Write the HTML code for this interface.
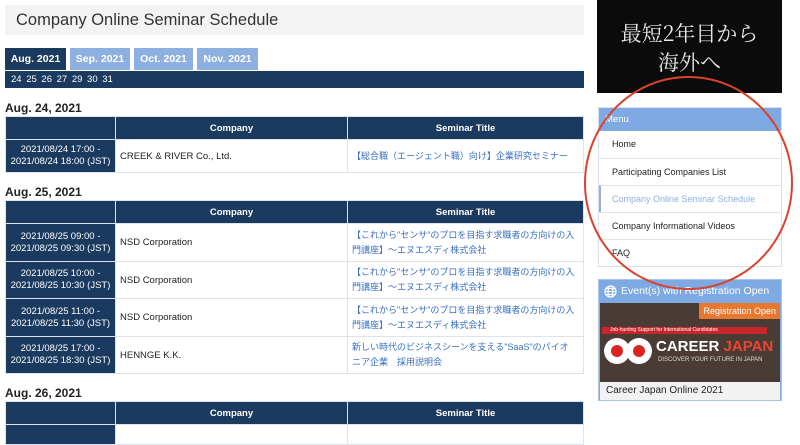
<!DOCTYPE html>
<html><head><meta charset="utf-8"><style>
*{box-sizing:border-box;margin:0;padding:0}
body{width:800px;height:429px;overflow:hidden;background:#fff;font-family:"Liberation Sans","Noto Sans CJK JP",sans-serif;color:#222;position:relative}
.a{position:absolute}
.title{left:5px;top:5px;width:579px;height:30px;background:#f3f3f3;font-size:16.5px;padding:6px 11px;color:#333}
.tab{top:48px;height:22px;font-size:10.5px;font-weight:bold;color:#fff;text-align:center;line-height:22px;background:#8db0e0}
.dates{left:5px;top:71px;width:579px;height:17px;background:#1b3a5f;color:#fff;font-size:9.5px;line-height:17px;padding-left:6px;word-spacing:2px}
h3{position:absolute;left:5px;font-size:12px;font-weight:bold;color:#222}
table{position:absolute;left:5px;width:579px;border-collapse:collapse;font-size:9.5px;table-layout:fixed}
td,th{border:1px solid #dde3ea;padding:0 4px;overflow:hidden}
th{background:#1b3a5f;color:#fff;height:23px;font-weight:bold}
td.t{background:#1b3a5f;color:#fff;text-align:center;line-height:12px;padding:0;white-space:nowrap;font-size:9.5px}
td.s{color:#3a6fc0;line-height:15px;font-size:9px;padding-right:6px}
.menu{left:598px;top:107px;width:184px;border:1px solid #dde;font-size:9px}
.menu .h{background:#7ea9e2;color:#fff;height:23px;line-height:23px;padding-left:6px;font-size:9.5px}
.menu .i{height:27px;line-height:27px;padding-left:13px;border-top:1px solid #e3e3e3}
</style></head><body>
<div class="a title">Company Online Seminar Schedule</div>
<div class="a tab" style="left:5px;width:61px;background:#1b3a5f">Aug. 2021</div>
<div class="a tab" style="left:70px;width:60px">Sep. 2021</div>
<div class="a tab" style="left:134px;width:59px">Oct. 2021</div>
<div class="a tab" style="left:197px;width:61px">Nov. 2021</div>
<div class="a dates">24 25 26 27 29 30 31</div>
<h3 style="top:101px">Aug. 24, 2021</h3>
<table style="top:116px"><colgroup><col style="width:110px"><col style="width:232px"><col></colgroup><tr><th></th><th>Company</th><th>Seminar Title</th></tr>
<tr style="height:33px"><td class="t">2021/08/24 17:00 -<br>2021/08/24 18:00 (JST)</td><td>CREEK &amp; RIVER Co., Ltd.</td><td class="s" style="white-space:nowrap">【総合職（エージェント職）向け】企業研究セミナー</td></tr></table>
<h3 style="top:185px">Aug. 25, 2021</h3>
<table style="top:200px"><colgroup><col style="width:110px"><col style="width:232px"><col></colgroup><tr><th></th><th>Company</th><th>Seminar Title</th></tr>
<tr style="height:38px"><td class="t">2021/08/25 09:00 -<br>2021/08/25 09:30 (JST)</td><td>NSD Corporation</td><td class="s">【これから"センサ"のプロを目指す求職者の方向けの入門講座】～エヌエスディ株式会社</td></tr>
<tr style="height:37px"><td class="t">2021/08/25 10:00 -<br>2021/08/25 10:30 (JST)</td><td>NSD Corporation</td><td class="s">【これから"センサ"のプロを目指す求職者の方向けの入門講座】～エヌエスディ株式会社</td></tr>
<tr style="height:38px"><td class="t">2021/08/25 11:00 -<br>2021/08/25 11:30 (JST)</td><td>NSD Corporation</td><td class="s">【これから"センサ"のプロを目指す求職者の方向けの入門講座】～エヌエスディ株式会社</td></tr>
<tr style="height:37px"><td class="t">2021/08/25 17:00 -<br>2021/08/25 18:30 (JST)</td><td>HENNGE K.K.</td><td class="s">新しい時代のビジネスシーンを支える"SaaS"のパイオニア企業　採用説明会</td></tr></table>
<h3 style="top:386px">Aug. 26, 2021</h3>
<table style="top:401px"><colgroup><col style="width:110px"><col style="width:232px"><col></colgroup><tr><th></th><th>Company</th><th>Seminar Title</th></tr><tr style="height:20px"><td class="t"></td><td></td><td></td></tr></table>

<div class="a" style="left:597px;top:0;width:185px;height:93px;background:#0b0b0b;color:#e8e8e8;font-family:'Noto Serif CJK SC',serif;font-size:21px;text-align:center;line-height:29px;padding-top:19px">最短2年目から<br>海外へ</div>
<div class="a menu"><div class="h">Menu</div>
<div class="i" style="border-top:none">Home</div>
<div class="i">Participating Companies List</div>
<div class="i" style="color:#8db0e0;border-left:2px solid #8db0e0;padding-left:11px">Company Online Seminar Schedule</div>
<div class="i">Company Informational Videos</div>
<div class="i">FAQ</div></div>
<div class="a" style="left:598px;top:279px;width:184px;height:122px;border:1px solid #a8c4ea;background:#7ea9e2">
<div style="height:23px;color:#fff;font-size:10.5px;line-height:23px;padding-left:22px">Event(s) with Registration Open</div>
<svg class="a" style="left:5px;top:5px" width="13" height="13" viewBox="0 0 14 14" fill="none" stroke="#fff" stroke-width="1.2"><circle cx="7" cy="7" r="6"/><ellipse cx="7" cy="7" rx="2.6" ry="6"/><path d="M1 7h12M2 4h10M2 10h10"/></svg>
<div style="height:79px;background:#4a3c35;position:relative;margin:0 1px;overflow:hidden">
<div class="a" style="right:0;top:0;background:#e8782e;color:#fff;font-size:9px;padding:3px 4px">Registration Open</div>
<div class="a" style="left:2px;top:24px;width:165px;height:7px;background:#c8262a;color:#fff;font-size:5px;line-height:7px;padding-left:8px;white-space:nowrap">Job-hunting Support for International Candidates</div>
<div class="a" style="left:4px;top:35px;width:26px;height:26px;border-radius:50%;background:#fff"></div>
<div class="a" style="left:26px;top:35px;width:26px;height:26px;border-radius:50%;background:#fff"></div>
<div class="a" style="left:11px;top:42px;width:12px;height:12px;border-radius:50%;background:#d22"></div>
<div class="a" style="left:33px;top:42px;width:12px;height:12px;border-radius:50%;background:#d22"></div>
<div class="a" style="left:56px;top:35px;font-size:15px;font-weight:bold;color:#fff;white-space:nowrap">CAREER <span style="color:#e43">JAPAN</span></div>
<div class="a" style="left:58px;top:54px;font-size:6px;color:#ddd;white-space:nowrap">DISCOVER YOUR FUTURE IN JAPAN</div></div>
<div style="height:18px;background:#f2f2f2;font-size:10px;line-height:18px;padding-left:6px;margin:0 1px">Career Japan Online 2021</div></div>
<div class="a" style="left:584px;top:76px;width:209px;height:214px;border:2px solid #d9432c;border-radius:50%"></div>
</body></html>
